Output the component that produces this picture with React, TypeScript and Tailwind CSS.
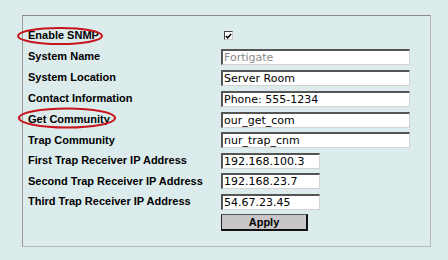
import React from "react";

const font = { fontFamily: '"Liberation Sans", Arial, sans-serif' };
const fieldFont = { fontFamily: '"DejaVu Sans", Verdana, sans-serif' };

function Field({ value, wide, muted }: { value: string; wide?: boolean; muted?: boolean }) {
  return (
    <div
      style={fieldFont}
      className={`h-[16px] ${wide ? "w-[189px]" : "w-[99px]"} bg-white border-t-2 border-l-2 border-r border-b border-t-[#555] border-l-[#555] border-r-[#d4d4d4] border-b-[#d4d4d4] pl-[1px] text-[11px] leading-[13px] ${muted ? "text-[#8a8a8a]" : "text-black"} whitespace-nowrap overflow-hidden`}
    >
      {value}
    </div>
  );
}

function Row({ label, h, children }: { label: string; h: string; children: React.ReactNode }) {
  return (
    <div className={`flex items-center ${h}`}>
      <div className="w-[193px] text-[11px] font-bold text-black whitespace-nowrap leading-none">{label}</div>
      <div className="flex items-center">{children}</div>
    </div>
  );
}

export default function App() {
  return (
    <div className="relative w-[448px] h-[260px] bg-[#dcecec] pt-[15px] pl-[22px]" style={font}>
      <div className="w-[409px] h-[232px] border-t border-l border-r border-b border-t-[#8c8c8c] border-l-[#9a9a9a] border-r-[#b8b8b8] border-b-[#b8b8b8] pt-[9px] pl-[5px]">
        <Row label="Enable SNMP" h="h-[21px]">
          <div className="ml-[3px] w-[9px] h-[9px] bg-white border-t border-l border-t-[#444] border-l-[#444] border-r border-b border-r-[#ccc] border-b-[#ccc] flex items-center justify-center">
            <svg width="7" height="6" viewBox="0 0 7 6">
              <path d="M0.8 3 L2.6 4.8 L6.2 0.9" stroke="#000" strokeWidth="1.5" fill="none" />
            </svg>
          </div>
        </Row>
        <Row label="System Name" h="h-[21px]">
          <Field value="Fortigate" wide muted />
        </Row>
        <Row label="System Location" h="h-[21px]">
          <Field value="Server Room" wide />
        </Row>
        <Row label="Contact Information" h="h-[21px]">
          <Field value="Phone: 555-1234" wide />
        </Row>
        <Row label="Get Community" h="h-[21px]">
          <Field value="our_get_com" wide />
        </Row>
        <Row label="Trap Community" h="h-[20px]">
          <Field value="nur_trap_cnm" wide />
        </Row>
        <Row label="First Trap Receiver IP Address" h="h-[21px]">
          <Field value="192.168.100.3" />
        </Row>
        <Row label="Second Trap Receiver IP Address" h="h-[20px]">
          <Field value="192.168.23.7" />
        </Row>
        <Row label="Third Trap Receiver IP Address" h="h-[21px]">
          <Field value="54.67.23.45" />
        </Row>
        <div className="flex h-[21px] items-center">
          <div className="w-[193px]" />
          <button className="w-[87px] h-[17px] bg-[#c9c6c9] border border-t-[#555] border-l-[#222] border-r-2 border-b-2 border-r-[#111] border-b-[#111] text-[11px] font-bold text-black leading-none flex items-center justify-center">
            Apply
          </button>
        </div>
      </div>
      <svg className="absolute left-0 top-0 pointer-events-none" width="448" height="260">
        <ellipse cx="60" cy="36" rx="42" ry="8" fill="none" stroke="#c8141c" strokeWidth="2" />
        <ellipse cx="67" cy="118" rx="48" ry="9.5" fill="none" stroke="#c8141c" strokeWidth="2" />
      </svg>
    </div>
  );
}
